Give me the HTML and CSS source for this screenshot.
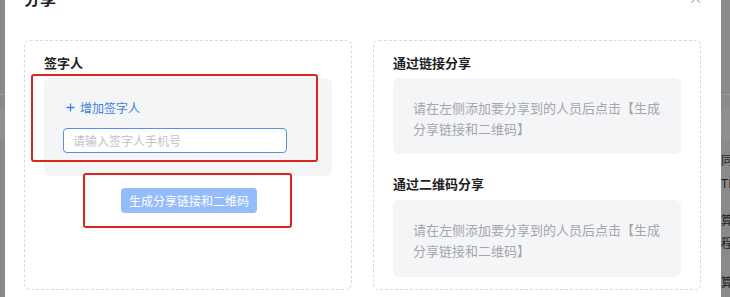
FILE: index.html
```html
<!DOCTYPE html>
<html lang="zh-CN">
<head>
<meta charset="utf-8">
<title>分享</title>
<link rel="stylesheet" href="styles.css">
</head>
<body>
<div class="page">
  <div class="page-line"></div>
  <div class="page-band"></div>
  <div class="page-text">
    <div class="pt pt1">同</div>
    <div class="pt pt2">TL</div>
    <div class="pt pt3">算</div>
    <div class="pt pt4">程</div>
    <div class="pt pt5">算</div>
  </div>
</div>

<div class="modal">
  <div class="modal-header">
    <span class="modal-title">分享</span>
    <span class="modal-close">×</span>
  </div>
  <div class="modal-body">
    <section class="card">
      <h3 class="card-title">签字人</h3>
      <div class="signer-box">
        <div class="add-link">
          <svg class="plus" width="9" height="9" viewBox="0 0 9 9"><path d="M4.5 0.5v8M0.5 4.5h8" stroke="#3d7fe0" stroke-width="1.3" fill="none"/></svg>
          <span>增加签字人</span>
        </div>
        <input class="phone-input" type="text" placeholder="请输入签字人手机号">
      </div>
      <div class="btn-row">
        <button class="gen-btn" disabled>生成分享链接和二维码</button>
      </div>
    </section>
    <section class="card">
      <h3 class="card-title">通过链接分享</h3>
      <div class="hint-box">请在左侧添加要分享到的人员后点击【生成分享链接和二维码】</div>
      <h3 class="card-title second">通过二维码分享</h3>
      <div class="hint-box">请在左侧添加要分享到的人员后点击【生成分享链接和二维码】</div>
    </section>
  </div>
</div>

<div class="mark mark-1"></div>
<div class="mark mark-2"></div>
</body>
</html>
```

FILE: styles.css
```css
* { box-sizing: border-box; }
html, body {
  margin: 0;
  padding: 0;
  width: 730px;
  height: 297px;
  overflow: hidden;
  font-family: "Noto Sans CJK SC", "Noto Sans", sans-serif;
}
body { position: relative; background: #8a8a8a; }

.page {
  height: 297px;
  display: flex;
  flex-direction: column;
  padding-top: 94px;
}
.page-line { height: 1px; background: #9a9a9a; }
.page-band { height: 33px; margin-top: 12px; background: #8f8f8f; }
.page-text {
  margin-left: 721px;
  margin-top: 12px;
  color: #1e1e1e;
  font-size: 12px;
  line-height: 16px;
}
.pt { height: 16px; }
.pt1 { margin-top: 0; }
.pt2 { margin-top: 7px; }
.pt3 { margin-top: 21px; }
.pt4 { margin-top: 7px; }
.pt5 { margin-top: 23px; }

.modal {
  position: absolute;
  left: 5px;
  top: -34px;
  width: 716px;
  background: #fff;
  padding: 20px 20px 20px 19px;
  border-radius: 4px;
}
.modal-header {
  height: 24px;
  display: flex;
  align-items: center;
  justify-content: space-between;
}
.modal-title {
  font-size: 16px;
  font-weight: 700;
  color: #1f1f1f;
  line-height: 24px;
}
.modal-close {
  font-size: 18px;
  color: #909399;
  line-height: 24px;
  margin-right: -2px;
  font-family: "DejaVu Sans", sans-serif;
  font-weight: 300;
}
.modal-body {
  margin-top: 30px;
  display: grid;
  grid-template-columns: 328px 328px;
  column-gap: 21px;
}
.card {
  height: 250px;
  border: 1px dashed #d6d9de;
  border-radius: 6px;
  padding: 12px 19px 0 19px;
}
.card-title {
  margin: 0 0 5px;
  font-size: 13px;
  font-weight: 700;
  line-height: 20px;
  color: #1f1f1f;
}
.card-title.second { margin-top: 20px; margin-bottom: 6px; }

.signer-box {
  background: #f4f5f7;
  border-radius: 6px;
  padding: 20px 19px 23px;
}
.add-link {
  display: flex;
  align-items: center;
  gap: 5px;
  margin-left: 3px;
  height: 18px;
  color: #3d7fe0;
  font-size: 12px;
}
.phone-input {
  display: block;
  margin-top: 12px;
  width: 224px;
  height: 25px;
  border: 1px solid #5b8fde;
  border-radius: 4px;
  padding: 0 9px;
  font-size: 12px;
  font-family: inherit;
  background: #fff;
  outline: none;
}
.phone-input::placeholder { color: #bfc2c7; }

.btn-row {
  display: flex;
  justify-content: center;
  margin-top: 12px;
  padding-left: 2px;
}
.gen-btn {
  width: 136px;
  height: 25px;
  border: none;
  border-radius: 4px;
  background: #94bcfa;
  color: #fff;
  font-size: 12px;
  font-family: inherit;
  padding: 0;
}

.hint-box {
  background: #f4f5f7;
  border-radius: 6px;
  padding: 19px 20px 15px;
  font-size: 13px;
  line-height: 21px;
  color: #a3a6ab;
  height: 76px;
}
.card-title.second + .hint-box { height: 77px; }

.mark {
  position: absolute;
  border: 2px solid #d9271d;
  border-radius: 3px;
}
.mark-1 { left: 31px; top: 74px; width: 287px; height: 88px; }
.mark-2 { left: 83px; top: 173px; width: 209px; height: 55px; }
```
